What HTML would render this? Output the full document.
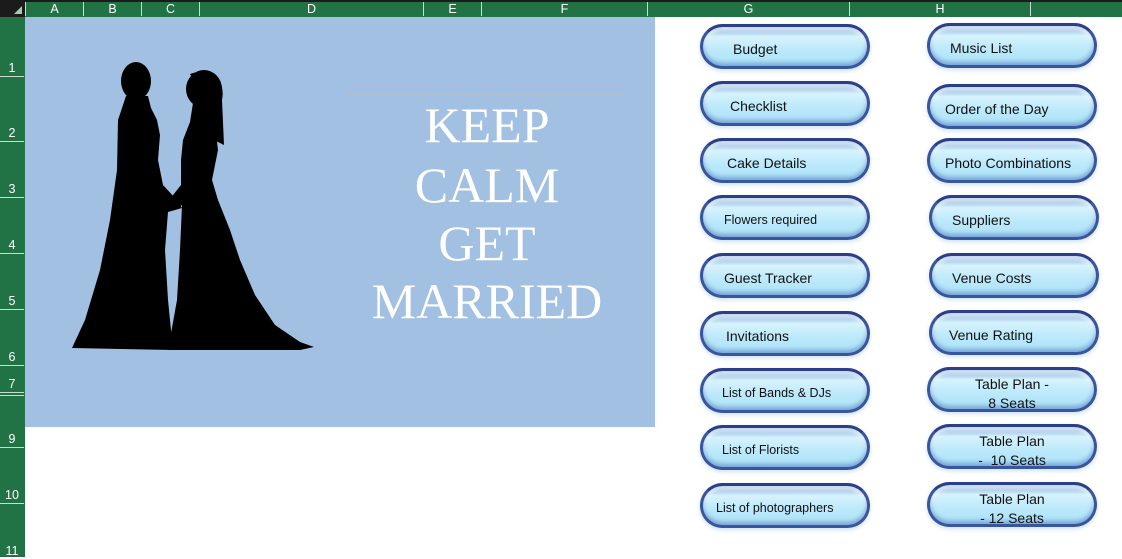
<!DOCTYPE html>
<html><head><meta charset="utf-8"><style>
*{margin:0;padding:0;box-sizing:border-box}
body{width:1122px;height:557px;overflow:hidden;background:#fff;position:relative;font-family:"Liberation Sans",sans-serif}
.hdr{position:absolute;left:0;top:0;width:1122px;height:17px;background:#217346;border-top:2px solid #1b1b1b}
.corner{position:absolute;left:0;top:0;width:25px;height:17px;background:#1b1b1b}
.corner:after{content:"";position:absolute;right:3px;bottom:3px;border-left:8px solid transparent;border-bottom:8px solid #a6c9b3}
.col{position:absolute;top:2px;height:14px;border-left:1px solid #c9dccf;color:#fff;font-size:12.5px;text-align:center;line-height:15px}
.rows{position:absolute;left:0;top:17px;width:25px;height:540px;background:#217346}
.rl{position:absolute;left:0;width:24px;border-bottom:1px solid #c9dccf;color:#fff;font-size:12.5px;text-align:center;line-height:15px}
.pic{position:absolute;left:25px;top:17px;width:630px;height:410px;background:#a2c0e2}
.kc{position:absolute;left:347px;width:280px;text-align:center;color:#fff;font-family:"Liberation Serif",serif;font-size:50px;line-height:58px}
.btn{position:absolute;width:170px;height:45px;border-radius:23px;border:3px solid #3856a0;border-top-color:#2a3f86;
background:linear-gradient(#7fa6d8 0%,#d6f3fd 25%,#bfeafb 55%,#a9e1f7 100%);
box-shadow:inset 0 -3px 4px rgba(60,90,170,.45),inset 0 4px 3px rgba(255,255,255,.6),0 2px 4px rgba(120,170,220,.35);
font-size:14px;color:#111;display:flex;align-items:center;line-height:19px;padding-top:5px}
.s{font-size:12.5px}
.c{justify-content:center;text-align:center;padding-top:8px}
</style></head><body>
<div class="hdr"></div><div class="corner"></div>
<div class="col" style="left:25px;width:58px">A</div>
<div class="col" style="left:83px;width:58px">B</div>
<div class="col" style="left:141px;width:58px">C</div>
<div class="col" style="left:199px;width:224px">D</div>
<div class="col" style="left:423px;width:58px">E</div>
<div class="col" style="left:481px;width:166px">F</div>
<div class="col" style="left:647px;width:202px">G</div>
<div class="col" style="left:849px;width:181px">H</div>
<div class="col" style="left:1030px;width:92px"></div>
<div class="rows"></div>
<div class="rl" style="top:61px">1</div>
<div class="rl" style="top:126px">2</div>
<div class="rl" style="top:182px">3</div>
<div class="rl" style="top:238px">4</div>
<div class="rl" style="top:294px">5</div>
<div class="rl" style="top:350px">6</div>
<div class="rl" style="top:377px;height:16px">7</div>
<div class="rl" style="top:394px;height:2px;font-size:0"></div>
<div class="rl" style="top:432px">9</div>
<div class="rl" style="top:488px">10</div>
<div class="rl" style="top:544px;border:none">11</div>
<div class="pic"></div>
<svg style="position:absolute;left:0;top:0" width="1122" height="557">
<line x1="347" y1="95" x2="623" y2="95" stroke="#bdbdbd" stroke-width="1"/>
<g fill="#000">
<ellipse cx="136" cy="81" rx="15" ry="19"/>
<path d="M126,96 L148,96 L151,108 L157,120 L160,135 L158,160 L163,185 L175,198 L182,208 L168,212 L165,250 L168,300 L172,340 L173,350 L72,348 L85,320 L100,270 L110,220 L117,170 L118,120 Z"/>
<ellipse cx="204" cy="89" rx="18" ry="19"/>
<path d="M190,74 C212,66 226,80 222,100 L224,145 L214,140 L210,110 Z"/>
<path d="M193,103 L210,106 L215,125 L218,150 L212,180 L218,200 L230,230 L240,260 L255,295 L275,325 L300,342 L314,347 L300,350 L168,350 L177,300 L180,250 L182,205 L175,210 L166,204 L181,185 L181,160 L183,140 L190,122 Z"/>
</g></svg>
<div class="kc" style="top:96px">KEEP</div>
<div class="kc" style="top:156px">CALM</div>
<div class="kc" style="top:214px">GET</div>
<div class="kc" style="top:272px">MARRIED</div>

<div class="btn" style="left:700px;top:24px;padding-left:30px">Budget</div>
<div class="btn" style="left:700px;top:81px;padding-left:27px">Checklist</div>
<div class="btn" style="left:700px;top:138px;padding-left:24px">Cake Details</div>
<div class="btn s" style="left:700px;top:195px;padding-left:21px">Flowers required</div>
<div class="btn" style="left:700px;top:253px;padding-left:21px">Guest Tracker</div>
<div class="btn" style="left:700px;top:311px;padding-left:23px">Invitations</div>
<div class="btn s" style="left:700px;top:368px;padding-left:19px">List of Bands &amp; DJs</div>
<div class="btn s" style="left:700px;top:425px;padding-left:19px">List of Florists</div>
<div class="btn s" style="left:700px;top:483px;padding-left:13px">List of photographers</div>

<div class="btn" style="left:927px;top:23px;padding-left:20px">Music List</div>
<div class="btn" style="left:927px;top:84px;padding-left:15px">Order of the Day</div>
<div class="btn" style="left:927px;top:138px;padding-left:15px">Photo Combinations</div>
<div class="btn" style="left:929px;top:195px;padding-left:20px">Suppliers</div>
<div class="btn" style="left:929px;top:253px;padding-left:20px">Venue Costs</div>
<div class="btn" style="left:929px;top:310px;padding-left:17px">Venue Rating</div>
<div class="btn c" style="left:927px;top:367px">Table Plan -<br>8 Seats</div>
<div class="btn c" style="left:927px;top:424px">Table Plan<br>-&nbsp; 10 Seats</div>
<div class="btn c" style="left:927px;top:482px">Table Plan<br>- 12 Seats</div>
</body></html>
